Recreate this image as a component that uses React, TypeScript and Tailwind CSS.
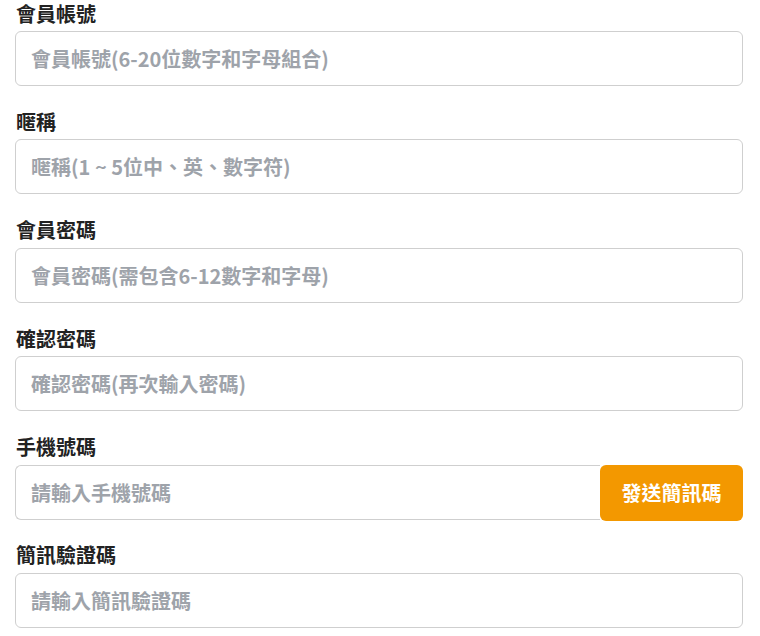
import React from "react";

const fields = [
  { label: "會員帳號", placeholder: "會員帳號(6-20位數字和字母組合)", type: "text" },
  { label: "暱稱", placeholder: "暱稱(1 ~ 5位中、英、數字符)", type: "text" },
  { label: "會員密碼", placeholder: "會員密碼(需包含6-12數字和字母)", type: "password" },
  { label: "確認密碼", placeholder: "確認密碼(再次輸入密碼)", type: "password" },
];

const labelCls =
  "flex h-[31px] items-center pl-[1px] pb-[4px] text-[20px] font-semibold text-[#222]";

const inputCls =
  "h-[55px] w-full rounded-md border border-[#cfcfcf] bg-white px-[15px] text-[20px] font-semibold text-[#333] placeholder:text-[#9ea3aa] outline-none";

export default function App() {
  return (
    <div
      className="min-h-screen bg-white pl-[15px] pr-[17px]"
      style={{ fontFamily: '"Noto Sans CJK TC", "Noto Sans", sans-serif' }}
    >
      <form className="flex flex-col gap-[22.4px]">
        {fields.map((f) => (
          <div key={f.label}>
            <label className={labelCls}>{f.label}</label>
            <input type={f.type} placeholder={f.placeholder} className={inputCls} />
          </div>
        ))}

        {/* phone number with send-code button */}
        <div>
          <label className={labelCls}>手機號碼</label>
          <div className="flex h-[55px] items-start">
            <input
              type="tel"
              placeholder="請輸入手機號碼"
              className="h-[55px] flex-1 rounded-l-md border border-r-0 border-[#cfcfcf] bg-white px-[15px] text-[20px] font-semibold text-[#333] placeholder:text-[#9ea3aa] outline-none"
            />
            <button
              type="button"
              className="h-[56px] w-[143px] rounded-md bg-[#f39800] text-[20px] font-semibold text-white"
            >
              發送簡訊碼
            </button>
          </div>
        </div>

        <div>
          <label className={labelCls}>簡訊驗證碼</label>
          <input type="text" placeholder="請輸入簡訊驗證碼" className={inputCls} />
        </div>
      </form>
    </div>
  );
}
